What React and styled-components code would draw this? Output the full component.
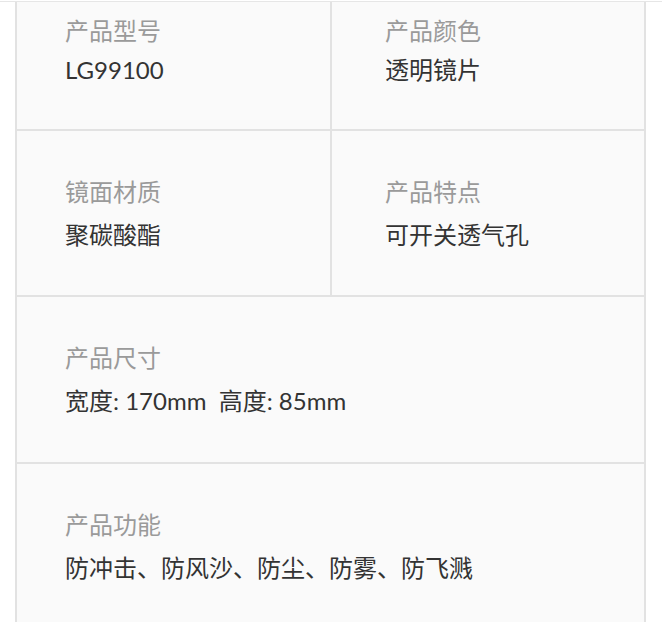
import styled, { createGlobalStyle } from 'styled-components';

const GlobalStyle = createGlobalStyle`
  body {
    margin: 0;
    background: #ffffff;
    font-family: "Lato", "Noto Sans CJK SC", sans-serif;
  }
`;

const TopRule = styled.div`
  height: 1px;
  margin-top: 1px;
  background: #e6e6e6;
`;

const Table = styled.div`
  width: 627px;
  margin-left: 15px;
  border-left: 2px solid #e2e2e2;
  border-right: 2px solid #e2e2e2;
  background: #fafafa;
`;

const Row = styled.div`
  display: grid;
  grid-template-columns: ${(p) => (p.split ? '313px 2px 1fr' : '1fr')};
  border-bottom: 2px solid #e2e2e2;
`;

const Divider = styled.div`
  background: #e2e2e2;
`;

const Cell = styled.div`
  display: flex;
  flex-direction: column;
  gap: ${(p) => p.gap}px;
  padding: ${(p) => p.top}px 0 ${(p) => p.bottom}px ${(p) => p.left}px;
`;

const Label = styled.div`
  font-size: 24px;
  line-height: 30px;
  color: #9a9a9a;
`;

const Value = styled.div`
  font-size: 24px;
  line-height: 30px;
  color: #333333;
  white-space: pre;
`;

const rows = [
  {
    top: 14,
    gap: 9,
    bottom: 44,
    cells: [
      { label: '产品型号', value: 'LG99100' },
      { label: '产品颜色', value: '透明镜片' },
    ],
  },
  {
    top: 46,
    gap: 13,
    bottom: 45,
    cells: [
      { label: '镜面材质', value: '聚碳酸酯' },
      { label: '产品特点', value: '可开关透气孔' },
    ],
  },
  {
    top: 46,
    gap: 13,
    bottom: 46,
    cells: [{ label: '产品尺寸', value: '宽度: 170mm  高度: 85mm' }],
  },
  {
    top: 46,
    gap: 13,
    bottom: 46,
    cells: [{ label: '产品功能', value: '防冲击、防风沙、防尘、防雾、防飞溅' }],
  },
];

export default function App() {
  return (
    <>
      <GlobalStyle />
      <TopRule />
      <Table>
        {rows.map((row, i) => (
          <Row key={i} split={row.cells.length > 1}>
            {row.cells.map((c, j) => [
              j > 0 && <Divider key={`d${j}`} />,
              <Cell
                key={j}
                top={row.top}
                gap={row.gap}
                bottom={row.bottom}
                left={j === 0 ? 48 : 53}
              >
                <Label>{c.label}</Label>
                <Value>{c.value}</Value>
              </Cell>,
            ])}
          </Row>
        ))}
      </Table>
    </>
  );
}
